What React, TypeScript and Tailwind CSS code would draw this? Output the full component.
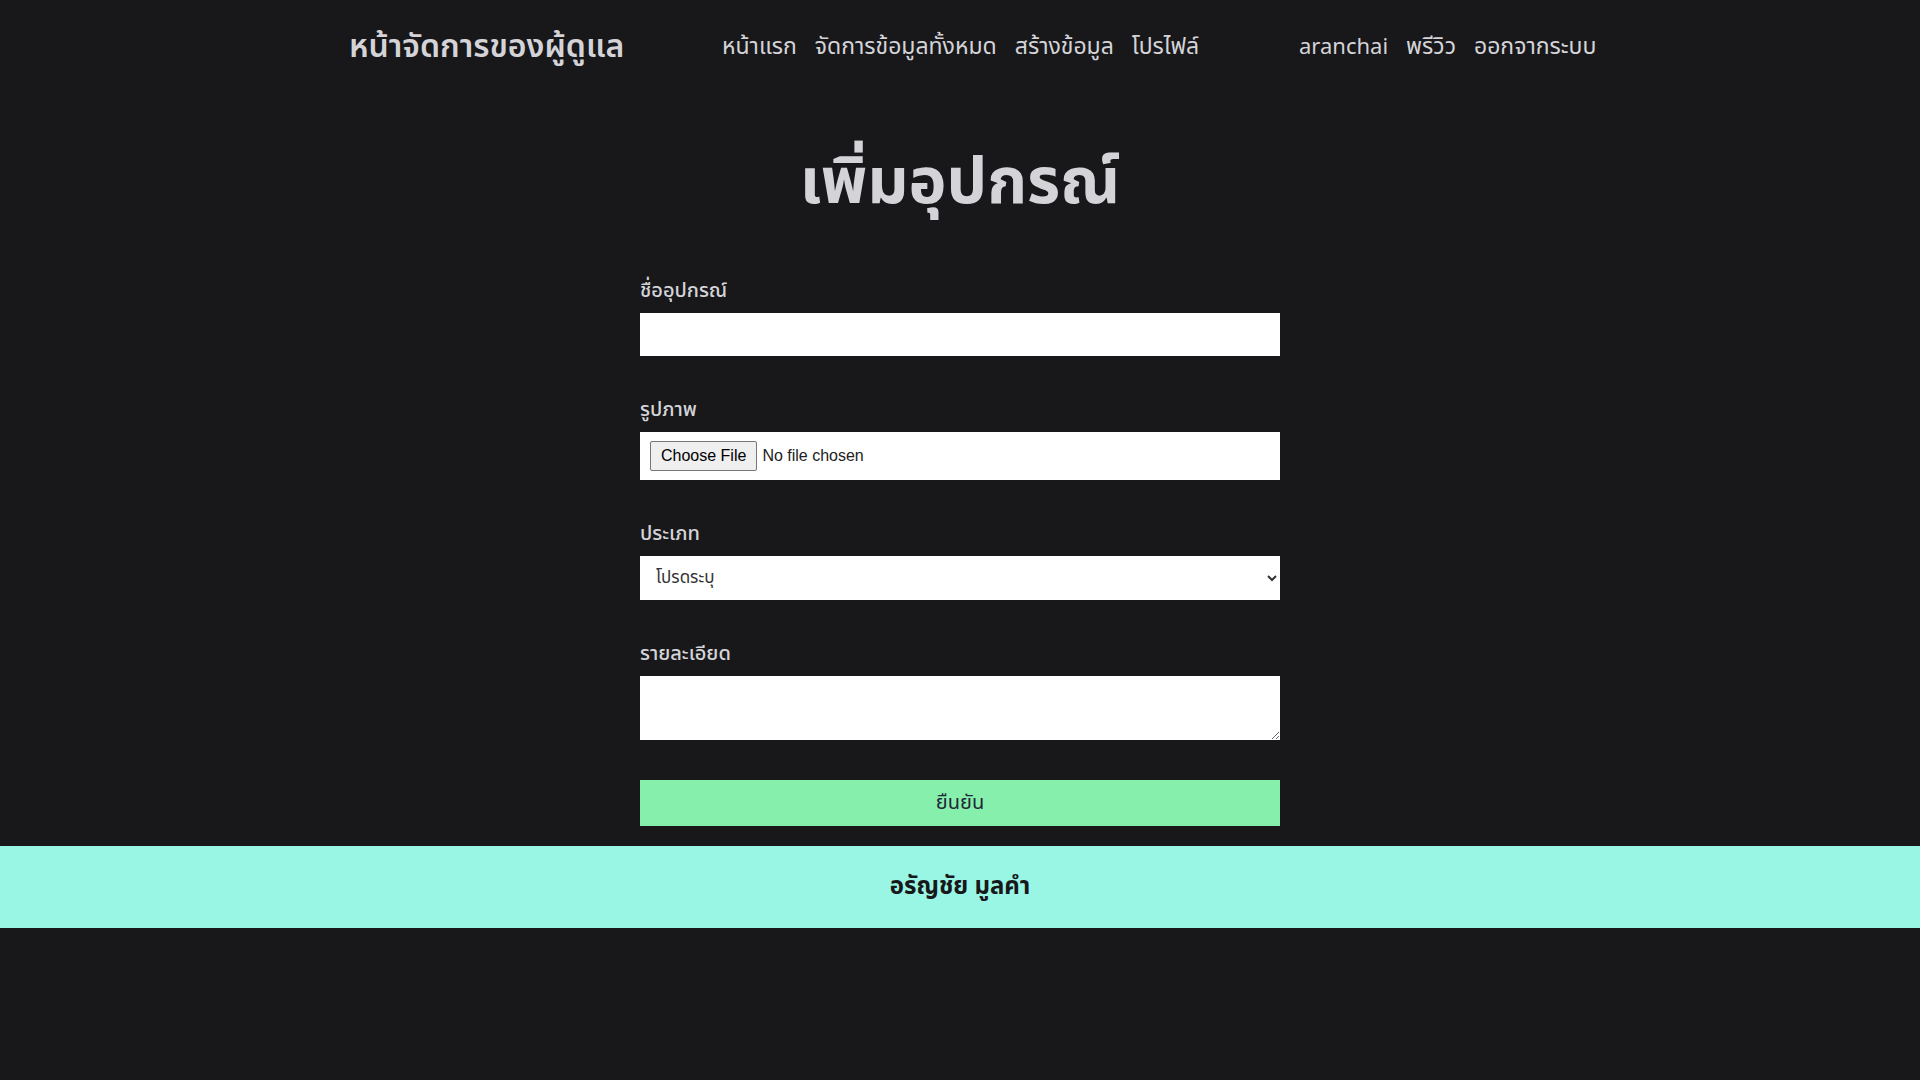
import React from "react";

export default function App() {
  const font = { fontFamily: '"Noto Sans Thai", "Noto Sans", sans-serif' };
  return (
    <div className="min-h-[1080px] w-full bg-[#18181b] text-[#d4d4d8]" style={font}>
      <header className="flex h-[94px] items-center pl-[349px]">
        <div className="w-[373px] shrink-0 text-[32px] font-semibold leading-none">หน้าจัดการของผู้ดูแล</div>
        <nav className="flex w-[577px] shrink-0 items-center gap-[18px] text-[23px]">
          <a>หน้าแรก</a>
          <a>จัดการข้อมูลทั้งหมด</a>
          <a>สร้างข้อมูล</a>
          <a>โปรไฟล์</a>
        </nav>
        <nav className="flex items-center gap-[18px] text-[22px]">
          <a>aranchai</a>
          <a className="text-[23px]">พรีวิว</a>
          <a className="text-[23px]">ออกจากระบบ</a>
        </nav>
      </header>

      <main className="mx-auto w-[640px]">
        <h1 className="mt-[48px] mb-[52px] text-center text-[64px] font-bold leading-[1.3]">เพิ่มอุปกรณ์</h1>

        <div className="mb-[40px]">
          <label className="mb-2 block text-[20px] font-medium leading-[28px]">ชื่ออุปกรณ์</label>
          <input type="text" className="block h-[43px] w-full bg-white px-3 text-black outline-none" />
        </div>

        <div className="mb-[40px]">
          <label className="mb-2 block text-[20px] font-medium leading-[28px]">รูปภาพ</label>
          <div className="flex h-[48px] w-full items-center bg-white px-[10px]">
            <input
              type="file"
              className="text-[16px] text-[#222] file:mr-[5px] file:rounded-[2px] file:border file:border-[#767676] file:bg-[#efefef] file:px-[10px] file:py-[2px] file:text-[16px] file:text-black"
              style={{ fontFamily: '"Liberation Sans", Arial, sans-serif' }}
            />
          </div>
        </div>

        <div className="mb-[40px]">
          <label className="mb-2 block text-[20px] font-medium leading-[28px]">ประเภท</label>
          <select className="block h-[44px] w-full bg-white px-3 text-[17px] text-[#333] outline-none">
            <option>โปรดระบุ</option>
          </select>
        </div>

        <div className="mb-[40px]">
          <label className="mb-2 block text-[20px] font-medium leading-[28px]">รายละเอียด</label>
          <textarea className="block h-[64px] w-full bg-white px-3 text-black outline-none" />
        </div>

        <button className="mb-[20px] block h-[46px] w-full bg-[#86efac] text-[20px] text-[#1f2937]">ยืนยัน</button>
      </main>

      <footer className="flex h-[82px] items-center justify-center bg-[#99f6e4] text-[24px] font-bold text-[#18181b]">
        อรัญชัย มูลคำ
      </footer>
    </div>
  );
}
